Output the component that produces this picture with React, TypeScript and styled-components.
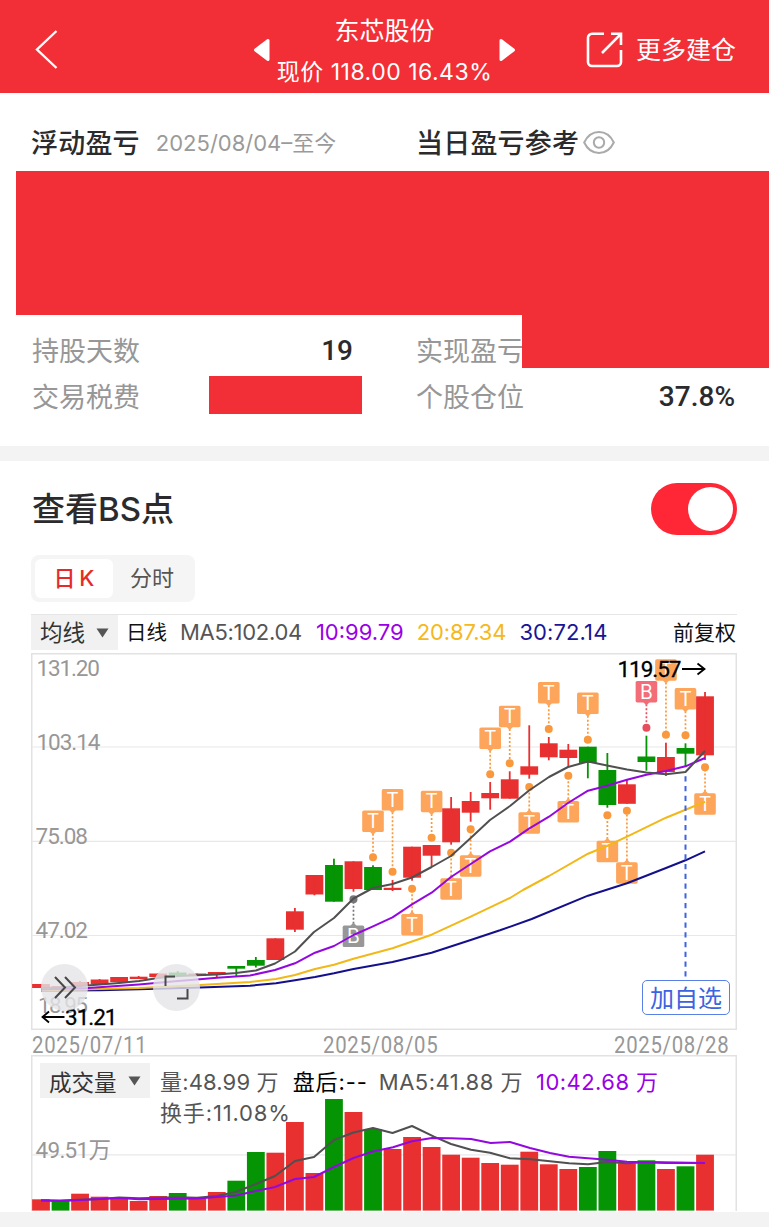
import React from "react";
import styled, { createGlobalStyle } from "styled-components";

const CJK = '"Noto Sans CJK SC"';

const GlobalStyle = createGlobalStyle`
  *, *::before, *::after { box-sizing: border-box; }
  html, body { margin: 0; padding: 0; background: #fff; }
  body {
    font-family: Inter, ${CJK}, sans-serif;
    color: #2b2b2d;
    -webkit-font-smoothing: antialiased;
  }
`;

const RED = "#f22f36";
const UP = "#e83030";
const DOWN = "#049404";

const Page = styled.div`
  width: 769px;
  height: 1232px;
  overflow: hidden;
  background: #fff;
`;

/* ---------- header ---------- */

const Header = styled.header`
  display: grid;
  grid-template-columns: 253px 263px 1fr;
  height: 93px;
  background: ${RED};
  color: #fff;
`;

const BackCell = styled.div`
  padding: 29px 0 0 34px;
`;

const Switcher = styled.div`
  display: flex;
  justify-content: space-between;
  padding-top: 15px;
`;

const ArrowIcon = styled.svg`
  flex: none;
  margin-top: 23px;
`;

const Title = styled.div`
  display: flex;
  flex-direction: column;
  align-items: center;
  white-space: nowrap;
`;

const StockName = styled.div`
  font-size: 25px;
  line-height: 32px;
`;

const StockPrice = styled.div`
  margin-top: 9px;
  font-size: 23px;
  line-height: 32px;
  letter-spacing: 0.5px;
`;

const MoreLink = styled.div`
  display: flex;
  align-items: center;
  justify-content: flex-end;
  gap: 13px;
  padding: 7px 33px 0 0;
  font-size: 25px;
  line-height: 36px;
`;

/* ---------- summary ---------- */

const Summary = styled.section`
  height: 353px;
`;

const SummaryHead = styled.div`
  display: grid;
  grid-template-columns: 385px 1fr;
  height: 78px;
  padding: 31px 0 0 31px;
`;

const HeadCell = styled.div<{ $gap: number }>`
  display: flex;
  align-items: center;
  height: 38px;
  gap: ${(p) => p.$gap}px;
`;

const HeadTitle = styled.span`
  padding-top: 2px;
  font-size: 27px;
  line-height: 38px;
  font-weight: 500;
  letter-spacing: 0.2px;
`;

const HeadRange = styled.span`
  font-size: 22px;
  line-height: 38px;
  color: #9a9a9a;
`;

const Masked = styled.div`
  height: 144px;
  margin-left: 16px;
  background: ${RED};
`;

const Stats = styled.div`
  position: relative;
  display: grid;
  grid-template-columns: 330px 319px;
  column-gap: 54px;
  grid-auto-rows: 46px;
  padding: 12px 0 0 32px;
`;

const Stat = styled.div`
  display: flex;
  align-items: center;
  justify-content: space-between;
`;

const StatLabel = styled.span`
  padding-top: 3px;
  font-size: 27px;
  line-height: 40px;
  color: #979797;
`;

const StatValue = styled.span<{ $inset?: number }>`
  padding: 2px ${(p) => p.$inset ?? 0}px 0 0;
  font-family: Roboto, sans-serif;
  font-size: 28px;
  line-height: 40px;
  font-weight: 500;
`;

const MaskedValue = styled.div`
  width: 153px;
  height: 38px;
  margin-top: -2px;
  background: ${RED};
`;

const MaskOverlay = styled.div`
  position: absolute;
  top: 0;
  right: 0;
  width: 247px;
  height: 53px;
  background: ${RED};
`;

const Divider = styled.div`
  height: 15px;
  background: #f3f3f3;
`;

/* ---------- chart section ---------- */

const ChartSection = styled.section`
  height: 751px;
  padding: 21px 32px 0 31px;
`;

const ToggleRow = styled.div`
  display: flex;
  align-items: center;
  justify-content: space-between;
  height: 53px;
`;

const ToggleLabel = styled.h2`
  margin: 0 0 0 1px;
  font-size: 33px;
  font-weight: 500;
  line-height: 48px;
`;

const Toggle = styled.div`
  display: flex;
  justify-content: flex-end;
  width: 86px;
  height: 52px;
  padding: 4px;
  border-radius: 26px;
  background: #ff2636;
`;

const Knob = styled.div`
  width: 45px;
  height: 44px;
  border-radius: 50%;
  background: #fff;
`;

const Tabs = styled.div`
  display: flex;
  width: 164px;
  height: 47px;
  margin-top: 20px;
  padding: 4px;
  border-radius: 8px;
  background: #f5f5f5;
`;

const Tab = styled.div<{ $active?: boolean }>`
  width: 78px;
  border-radius: 6px;
  text-align: center;
  font-size: 22px;
  line-height: 39px;
  word-spacing: -2px;
  color: ${(p) => (p.$active ? "#e62a2a" : "#555")};
  background: ${(p) => (p.$active ? "#fff" : "transparent")};
  font-weight: ${(p) => (p.$active ? 500 : 400)};
`;

const Legend = styled.div`
  display: flex;
  align-items: center;
  height: 39px;
  margin-top: 12px;
  padding-bottom: 3px;
  border-top: 1px solid #e6e6e6;
  font-size: 22px;
  line-height: 35px;
  white-space: nowrap;
`;

const Picker = styled.div<{ $w: number }>`
  display: flex;
  flex: none;
  align-items: center;
  justify-content: space-between;
  width: ${(p) => p.$w}px;
  height: 35px;
  padding: 0 9px;
  background: #f1f1f1;
  color: #333;
  font-size: 22.5px;
`;

const Reading = styled.span<{ $c: string; $ml: number; $ls?: number; $size?: number }>`
  margin-left: ${(p) => p.$ml}px;
  color: ${(p) => p.$c};
  font-size: ${(p) => p.$size ?? 22}px;
  letter-spacing: ${(p) => p.$ls ?? 0}px;
`;

const Adjust = styled.span`
  margin: 0 1px 0 auto;
  color: #111;
  font-size: 21px;
`;

const PriceChart = styled.div`
  position: relative;
  height: 377px;
`;

const Canvas = styled.svg`
  display: block;
`;

const RoundButton = styled.div<{ $x: number }>`
  position: absolute;
  left: ${(p) => p.$x}px;
  top: 311px;
  width: 47px;
  height: 47px;
  border-radius: 50%;
  background: rgba(229, 229, 233, 0.8);
`;

const AddButton = styled.div`
  position: absolute;
  left: 611px;
  top: 327px;
  width: 88px;
  height: 35px;
  border: 1.5px solid #5a80e8;
  border-radius: 5px;
  background: #fff;
  color: #3c63e0;
  font-size: 24px;
  line-height: 35px;
  text-align: center;
`;

const Dates = styled.div`
  display: flex;
  justify-content: space-between;
  height: 25px;
  padding: 0 8px 0 1px;
`;

const DateTick = styled.span`
  width: 115px;
  font-family: Roboto, sans-serif;
  font-size: 23px;
  line-height: 31px;
  color: #979797;
  white-space: nowrap;
  letter-spacing: 0.8px;
  transform: scaleX(0.885);
  transform-origin: 0 50%;
`;

const VolumeChart = styled.div`
  position: relative;
  height: 156px;
`;

const VolumeLegend = styled.div`
  position: absolute;
  left: 9px;
  top: 8px;
  display: flex;
  height: 66px;
  white-space: nowrap;
`;

const VolumeRows = styled.div`
  padding-left: 10px;
`;

const VolumeRow = styled.div`
  height: 31px;
  font-size: 22px;
  line-height: 38px;
`;

/* ---------- data ---------- */

const STEP = 19.53;
const xAt = (i: number) => 41 + STEP * i;

type Candle = [high: number, top: number, bottom: number, low: number, up: 0 | 1, volume: number];

const candles: Candle[] = [
  [984, 984, 988, 988, 1, 1199.3],
  [986, 986, 989, 989, 1, 1200.7],
  [981, 982, 986, 986, 1, 1193.7],
  [979, 979.5, 984, 984, 1, 1196.7],
  [977, 977, 982, 982, 1, 1197.7],
  [976, 976.7, 979, 979, 1, 1201],
  [973.5, 973.5, 977, 977, 1, 1196],
  [971, 972.5, 975, 976, 0, 1193],
  [973.5, 973.5, 975.7, 976, 1, 1198.3],
  [972, 972, 974.5, 978, 1, 1192],
  [966, 966, 968.7, 976, 0, 1180.7],
  [957, 960, 965.7, 967.5, 0, 1152],
  [938.3, 938.3, 960, 960, 1, 1152.7],
  [908, 911.3, 929.7, 932, 1, 1122],
  [875, 875, 894.5, 895.3, 1, 1173],
  [858.7, 865, 901.7, 901.7, 0, 1099],
  [861.3, 861.3, 889, 891.7, 1, 1112],
  [865.3, 867, 890, 890, 0, 1129],
  [880, 887.8, 890, 891, 1, 1149],
  [846.7, 846.7, 877.7, 880.7, 1, 1137],
  [845, 845, 855.7, 866, 1, 1147],
  [797, 808.3, 842.3, 844.7, 1, 1154.7],
  [792, 801, 812.7, 821.7, 1, 1157.7],
  [782, 793, 798.3, 809.7, 1, 1163],
  [771.3, 779.3, 798.7, 798.7, 1, 1164.7],
  [725.3, 766.3, 774.7, 778.7, 1, 1151.7],
  [737, 743.3, 757.3, 760.3, 1, 1164.3],
  [744, 749.7, 758, 766.7, 1, 1169],
  [746.7, 746.7, 763, 778.3, 0, 1167],
  [753, 770, 805, 807.7, 0, 1151],
  [779, 784.3, 803.8, 803.8, 1, 1163.3],
  [735.7, 756.5, 762, 770.7, 0, 1160.3],
  [742.7, 757, 772, 776, 1, 1169],
  [743.3, 748, 753.7, 767, 0, 1166.3],
  [692, 696.3, 755.3, 760, 1, 1154.7],
];

/* [candle index, label, label centre y, dot y] */
const marks: [number, "T" | "B", number, number][] = [
  [16, "B", 936.3, 899.3],
  [17, "T", 821.3, 857.3],
  [18, "T", 799.8, 871.7],
  [19, "T", 924.7, 888.7],
  [20, "T", 801.5, 837.7],
  [21, "T", 889, 852.7],
  [22, "T", 866, 829.3],
  [23, "T", 738.3, 774.3],
  [24, "T", 716.5, 763.3],
  [25, "T", 823, 787],
  [26, "T", 692.7, 729],
  [27, "T", 811.7, 775.7],
  [28, "T", 703.3, 739.7],
  [29, "T", 851.5, 815.3],
  [30, "T", 873, 810.7],
  [31, "B", 691.7, 727.7],
  [32, "T", 670, 734.7],
  [33, "T", 698.8, 735.3],
  [34, "T", 804, 767.3],
];

const ma5 =
  "41,988 60,987.5 80,986 100,984.5 119,983 139,981 158,978 178,976 197,975.3 217,974.5 236,973 256,970.5 275,963.5 295,951.5 314,932 334,918 353.5,898.5 373,888 392.5,884 412,877.5 431.6,867 451,856 470.7,838 490,820 510,806 529,790.5 549,777 568,767 588,761.5 607,765.5 627,769.5 646.4,772.5 666,774.3 685.5,772 705,751";
const ma10 =
  "41,989.5 88,988 139,984.5 178,981 197,979.5 217,977.7 250,975.5 275,970 295,963.3 315,952.7 334,946 353.5,935 373,926.3 392.5,917.3 412,904.3 431.6,892.7 451,877 470.7,864 490,851.3 510,841.7 529,828.7 549,816.7 568,803 588,790.7 607,785.7 627,779.7 646.4,774.7 666,771 685.5,766.3 705,758";
const ma20 =
  "41,990.2 88,989.3 139,988 200,985 250,982 276,979 295,975 315,969 334,964.7 353.5,958.7 392.5,948.3 431.6,934.7 470.7,916.7 510,898 523,890 549,876 588,853.7 607,846 627,836.7 666,817.7 705,801.7";
const ma30 =
  "41,990.8 100,990.3 139,989.3 200,987.5 250,985.7 276,983.3 295,980.3 315,977 334,973.3 353.5,969 392.5,962 431.6,952.7 470.7,940 500,930.3 531.7,919 588,895.7 627,883.3 666,868 685.5,860.3 705,851.3";
const vol5 =
  "41,1200.3 60,1200.5 100,1199 119,1197.5 139,1198.3 178,1197.3 197,1197.8 217,1196 236,1192 256,1184 275,1176 295,1161 314,1157 334,1140 353.5,1132.5 373,1128 392.5,1133 412,1126 434,1136.7 451,1144 471,1149.7 490,1152.7 510,1158.3 530.7,1159.3 550,1161.3 569,1163.3 588,1164.3 607,1162 627,1163.3 650,1162 705,1163";
const vol10 =
  "41,1200.5 60,1201 100,1199 119,1198 139,1199.2 197,1198.5 217,1197 236,1195.5 256,1191 275,1187 295,1179 314,1177 334,1167 353.5,1158 373,1151.5 393,1147.3 412,1141.3 432,1138 451,1138.3 471,1139 490.7,1143 510,1142 530,1148 550,1153 569,1156.7 588,1158.3 607,1159.7 627,1161.7 666,1163 705,1163";

const axis: [string, number, number, number][] = [
  ["131.20", 36.5, 675.5, 63.5],
  ["103.14", 36.5, 750, 64],
  ["75.08", 35.5, 844.3, 52.5],
  ["47.02", 35.5, 938.3, 52.5],
  ["18.95", 38, 1013, 50],
];

/* ---------- parts ---------- */

const Line = ({ points, color }: { points: string; color: string }) => (
  <polyline points={points} fill="none" stroke={color} strokeWidth={2} strokeLinejoin="round" />
);

const Caret = () => (
  <svg width="13" height="10" viewBox="0 0 13 10">
    <path d="M0.5 0.5H12.5L6.5 9.5Z" fill="#555" />
  </svg>
);

function Mark({ i, label, cy, dot }: { i: number; label: "T" | "B"; cy: number; dot: number }) {
  const x = xAt(i);
  const above = cy < dot;
  const dir = above ? 1 : -1;
  const edge = cy + dir * 10.5;
  const grey = i === 16;
  const box = label === "T" ? "#fda55b" : grey ? "#979797" : "#f26d78";
  const ink = label === "T" ? "#f9983c" : grey ? "#77777b" : "#e64e5e";
  return (
    <g>
      <line x1={x} x2={x} y1={edge + dir * 2} y2={dot} stroke={ink} strokeWidth={1.7} strokeDasharray="2 2" />
      <circle cx={x} cy={dot} r={4} fill={ink} />
      <path d={`M${x - 3.5} ${edge - dir * 0.5}h7l-3.5 ${dir * 3.8}z`} fill={box} />
      <rect x={x - 10.8} y={cy - 10.7} width={21.6} height={21.4} rx={1.6} fill={box} />
      <text x={x} y={cy + 6.9} fontSize={19.5} textAnchor="middle" fill="#fff" fontFamily="Inter, sans-serif">
        {label}
      </text>
    </g>
  );
}

export default function App() {
  return (
    <Page>
      <GlobalStyle />
      <Header>
        <BackCell>
          <svg width="24" height="41" viewBox="0 0 24 41" fill="none" stroke="#fff" strokeWidth="2.4">
            <path d="M22.500 2L3 20.500L22.500 39" />
          </svg>
        </BackCell>
        <Switcher>
          <ArrowIcon width="17" height="24" viewBox="0 0 17 24">
            <path d="M15 2.500V21.500L2.500 12Z" fill="#fff" stroke="#fff" strokeWidth="3" strokeLinejoin="round" />
          </ArrowIcon>
          <Title>
            <StockName>东芯股份</StockName>
            <StockPrice>现价 118.00 16.43%</StockPrice>
          </Title>
          <ArrowIcon width="17" height="24" viewBox="0 0 17 24">
            <path d="M2 2.500V21.500L14.500 12Z" fill="#fff" stroke="#fff" strokeWidth="3" strokeLinejoin="round" />
          </ArrowIcon>
        </Switcher>
        <MoreLink>
          <svg width="37" height="36" viewBox="0 0 37 36" fill="none" stroke="#fff" strokeWidth="2.6">
            <path d="M18 1.8H6a4 4 0 0 0-4 4V30a4 4 0 0 0 4 4H31a4 4 0 0 0 4-4V18" />
            <path d="M25 1.8H35V13M35 1.8L16 21" />
          </svg>
          更多建仓
        </MoreLink>
      </Header>

      <Summary>
        <SummaryHead>
          <HeadCell $gap={16}>
            <HeadTitle>浮动盈亏</HeadTitle>
            <HeadRange>2025/08/04–至今</HeadRange>
          </HeadCell>
          <HeadCell $gap={4}>
            <HeadTitle>当日盈亏参考</HeadTitle>
            <svg width="32" height="24" viewBox="0 0 32 24" fill="none" stroke="#aaa" strokeWidth="2">
              <path d="M1.200 11.500C4.500 4.500 9.500 1 16 1S27.500 4.500 30.800 11.500C27.500 18.500 22.500 22 16 22S4.500 18.500 1.200 11.500Z" />
              <circle cx="16" cy="11.500" r="5.200" />
            </svg>
          </HeadCell>
        </SummaryHead>
        <Masked />
        <Stats>
          <Stat>
            <StatLabel>持股天数</StatLabel>
            <StatValue $inset={9}>19</StatValue>
          </Stat>
          <Stat>
            <StatLabel>实现盈亏</StatLabel>
          </Stat>
          <Stat>
            <StatLabel>交易税费</StatLabel>
            <MaskedValue />
          </Stat>
          <Stat>
            <StatLabel>个股仓位</StatLabel>
            <StatValue>37.8%</StatValue>
          </Stat>
          <MaskOverlay />
        </Stats>
      </Summary>

      <Divider />

      <ChartSection>
        <ToggleRow>
          <ToggleLabel>查看BS点</ToggleLabel>
          <Toggle>
            <Knob />
          </Toggle>
        </ToggleRow>
        <Tabs>
          <Tab $active>日 K</Tab>
          <Tab>分时</Tab>
        </Tabs>

        <Legend>
          <Picker $w={87}>
            均线
            <Caret />
          </Picker>
          <Reading $c="#111" $ml={8} $size={20.5}>日线</Reading>
          <Reading $c="#555" $ml={13} $ls={-0.3}>MA5:102.04</Reading>
          <Reading $c="#9a00e6" $ml={14}>10:99.79</Reading>
          <Reading $c="#f5b820" $ml={13} $ls={-0.1}>20:87.34</Reading>
          <Reading $c="#1a1496" $ml={13} $ls={0.1}>30:72.14</Reading>
          <Adjust>前复权</Adjust>
        </Legend>

        <PriceChart>
          <Canvas width="706" height="377" viewBox="31 653 706 377">
            <rect x="31.750" y="653.750" width="704.500" height="375.500" fill="none" stroke="#e2e2e2" strokeWidth="1.500" />
            {[747, 841.3, 935.5].map((y) => (
              <line key={y} x1="32" x2="736" y1={y} y2={y} stroke="#e8e8e8" strokeWidth="1.200" />
            ))}
            {axis.map(([t, x, y, w]) => (
              <text key={t} x={x} y={y} textLength={w} fontSize="22.500" fill="#979797" fontFamily="Roboto, sans-serif">
                {t}
              </text>
            ))}
            {marks.map(([i, label, cy, dot]) => (
              <Mark key={i} i={i} label={label} cy={cy} dot={dot} />
            ))}
            {candles.map(([h, t, b, l, up], i) => (
              <g key={i} fill={up ? UP : DOWN}>
                <rect x={xAt(i) - 8.9} y={t} width={17.8} height={b - t} />
                <rect x={xAt(i) - 0.9} y={h} width={1.8} height={l - h} />
              </g>
            ))}
            <Line points={ma30} color="#14108c" />
            <Line points={ma20} color="#f2b818" />
            <Line points={ma10} color="#9408e0" />
            <Line points={ma5} color="#505050" />
            <line x1="685.500" x2="685.500" y1="776.300" y2="979" stroke="#3c63e0" strokeWidth="2" strokeDasharray="5.300 4.450" />
            <g fill="#000" stroke="#000" strokeWidth="0.300" fontFamily="Roboto, sans-serif" fontSize="22.500">
              <text x="617.500" y="677" textLength="64">119.57</text>
              <text x="65" y="1025" textLength="52.500">31.21</text>
            </g>
            <path d="M682 669H704M697.500 663.500L704.500 669L697.500 674.500M64.500 1017H43M49 1011.500L42.500 1017L49 1022.500" fill="none" stroke="#000" strokeWidth="1.800" />
          </Canvas>
          <RoundButton $x={10}>
            <svg width="47" height="47" viewBox="0 0 47 47" fill="none" stroke="#484848" strokeWidth="2">
              <path d="M14 13L24 23.500L14 34M24 13L34 23.500L24 34" />
            </svg>
          </RoundButton>
          <RoundButton $x={122}>
            <svg width="47" height="47" viewBox="0 0 47 47" fill="none" stroke="#484848" strokeWidth="2">
              <path d="M12.500 22V12.500H22M34.500 25V34.500H24" />
            </svg>
          </RoundButton>
          <AddButton>加自选</AddButton>
        </PriceChart>

        <Dates>
          <DateTick>2025/07/11</DateTick>
          <DateTick>2025/08/05</DateTick>
          <DateTick>2025/08/28</DateTick>
        </Dates>

        <VolumeChart>
          <Canvas width="706" height="156" viewBox="31 1055 706 156">
            <path d="M31.750 1211V1055.750H736.250V1211" fill="none" stroke="#e2e2e2" strokeWidth="1.500" />
            <line x1="32" x2="736" y1="1154.800" y2="1154.800" stroke="#e8e8e8" strokeWidth="1.200" />
            <text x="35.500" y="1158" fontSize="22.500" fill="#979797" fontFamily={`Roboto, ${CJK}, sans-serif`} textLength="75.500">
              49.51万
            </text>
            {candles.map(([, , , , up, v], i) => (
              <rect
                key={i}
                x={xAt(i) - 8.9}
                y={v}
                width={17.8}
                height={1210.6 - v}
                fill={i === 1 || !up ? DOWN : UP}
              />
            ))}
            <Line points={vol5} color="#505050" />
            <Line points={vol10} color="#9408e0" />
          </Canvas>
          <VolumeLegend>
            <Picker $w={110}>
              成交量
              <Caret />
            </Picker>
            <VolumeRows>
              <VolumeRow>
                <Reading $c="#555" $ml={0} $ls={0.15}>量:48.99 万</Reading>
                <Reading $c="#000" $ml={14} $ls={0.9}>盘后:--</Reading>
                <Reading $c="#555" $ml={11} $ls={0.5}>MA5:41.88 万</Reading>
                <Reading $c="#9a00e6" $ml={13} $ls={0.45}>10:42.68 万</Reading>
              </VolumeRow>
              <VolumeRow>
                <Reading $c="#555" $ml={0} $ls={0.85}>换手:11.08%</Reading>
              </VolumeRow>
            </VolumeRows>
          </VolumeLegend>
        </VolumeChart>
      </ChartSection>
      <Divider />
    </Page>
  );
}
